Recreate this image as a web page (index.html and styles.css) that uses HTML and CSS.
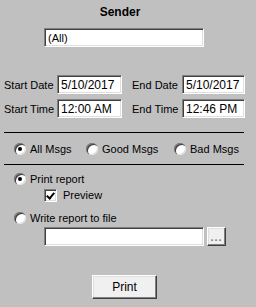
FILE: index.html
```html
<!DOCTYPE html>
<html lang="en">

<head>
    <meta charset="UTF-8">
    <title>Print Messages</title>
    <link rel="stylesheet" href="styles.css">
</head>

<body>
    <div class="panel">
        <div class="title">Sender</div>
        <div class="sender-row">
            <div class="field sender">(All)</div>
        </div>

        <div class="range">
            <span class="label">Start Date</span>
            <div class="field">5/10/2017</div>
            <span class="label">End Date</span>
            <div class="field">5/10/2017</div>
            <span class="label">Start Time</span>
            <div class="field">12:00 AM</div>
            <span class="label">End Time</span>
            <div class="field">12:46 PM</div>
        </div>

        <div class="rule"></div>

        <div class="msg-types">
            <label class="option all"><span class="radio checked"></span>All Msgs</label>
            <label class="option good"><span class="radio"></span>Good Msgs</label>
            <label class="option bad"><span class="radio"></span>Bad Msgs</label>
        </div>

        <div class="rule"></div>

        <label class="option output"><span class="radio checked"></span>Print report</label>
        <label class="option preview"><span class="check checked"></span>Preview</label>
        <label class="option output"><span class="radio"></span>Write report to file</label>
        <div class="file-row">
            <div class="field file"></div>
            <button type="button" class="browse">...</button>
        </div>

        <div class="actions">
            <button type="button" class="print">Print</button>
        </div>
    </div>
</body>

</html>
```

FILE: styles.css
```css
body {
    margin: 0;
    background-color: #c0c0c0;
    font-family: "Liberation Sans", Arial, sans-serif;
    font-size: 11px;
    color: #000;
}

.panel {
    width: 256px;
    height: 307px;
    padding-top: 5px;
    box-sizing: border-box;
}

.title {
    width: 240px;
    text-align: center;
    font-weight: bold;
    font-size: 12px;
    line-height: 14px;
}

.sender-row {
    margin-top: 9px;
    padding-left: 44px;
}

.field {
    background-color: #fff;
    border-top: 1px solid #808080;
    border-left: 1px solid #808080;
    border-right: 1px solid #fff;
    border-bottom: 1px solid #fff;
    box-shadow: inset 1px 1px 0 #404040, inset -1px -1px 0 #dfdfdf;
    height: 19px;
    line-height: 19px;
    padding-left: 3px;
    box-sizing: border-box;
    font-size: 12px;
    white-space: nowrap;
}

.sender {
    width: 160px;
    font-size: 11px;
}

.range {
    display: grid;
    grid-template-columns: 53px 65px 60px 63px;
    grid-template-rows: 19px 19px;
    row-gap: 5px;
    align-items: center;
    margin-top: 28px;
    padding-left: 4px;
}

.range .label {
    font-size: 11px;
    white-space: nowrap;
}

.range .label:nth-of-type(2),
.range .label:nth-of-type(4) {
    padding-left: 10px;
}

.rule {
    height: 1px;
    width: 240px;
    margin-left: 4px;
    background-color: #000;
}

.range + .rule {
    margin-top: 14px;
}

.msg-types {
    display: flex;
    height: 31px;
    align-items: center;
    padding-left: 14px;
}

.option {
    display: flex;
    align-items: center;
    gap: 4px;
    font-size: 11px;
    line-height: 14px;
    white-space: nowrap;
}

.msg-types .all {
    width: 72px;
}

.msg-types .good {
    width: 88px;
}

.output {
    margin-left: 14px;
}

.msg-types + .rule + .output {
    margin-top: 7px;
}

.preview {
    margin-left: 44px;
    margin-top: 2px;
    gap: 6px;
}

.preview + .output {
    margin-top: 9px;
}

.radio {
    width: 12px;
    height: 12px;
    border-radius: 50%;
    background-color: #fff;
    box-shadow: inset 1px 1px 0 #808080, inset 2px 2px 0 #404040, inset -1px -1px 0 #dfdfdf;
    position: relative;
    flex: none;
}

.radio.checked::after {
    content: "";
    position: absolute;
    left: 4px;
    top: 4px;
    width: 4px;
    height: 4px;
    border-radius: 50%;
    background-color: #000;
}

.check {
    width: 13px;
    height: 13px;
    background-color: #fff;
    box-sizing: border-box;
    border-top: 1px solid #808080;
    border-left: 1px solid #808080;
    border-right: 1px solid #fff;
    border-bottom: 1px solid #fff;
    box-shadow: inset 1px 1px 0 #404040, inset -1px -1px 0 #dfdfdf;
    position: relative;
    flex: none;
}

.check.checked::after {
    content: "";
    position: absolute;
    left: 3px;
    top: 1px;
    width: 3px;
    height: 6px;
    border-right: 2px solid #000;
    border-bottom: 2px solid #000;
    transform: rotate(40deg);
}

.file-row {
    display: flex;
    gap: 3px;
    margin-top: 2px;
    padding-left: 44px;
}

.file {
    width: 160px;
}

button {
    font-family: "Liberation Sans", Arial, sans-serif;
    background-color: #f0f0f0;
    border-top: 1px solid #fff;
    border-left: 1px solid #fff;
    border-right: 1px solid #404040;
    border-bottom: 1px solid #404040;
    box-shadow: inset -1px -1px 0 #808080, inset 1px 1px 0 #dfdfdf;
    padding: 0;
    color: #000;
}

.browse {
    width: 19px;
    height: 19px;
    color: #808080;
    font-weight: bold;
    font-size: 11px;
    line-height: 12px;
    letter-spacing: 1px;
}

.actions {
    margin-top: 29px;
    padding-left: 92px;
}

.print {
    width: 65px;
    height: 24px;
    font-size: 12px;
}
```
